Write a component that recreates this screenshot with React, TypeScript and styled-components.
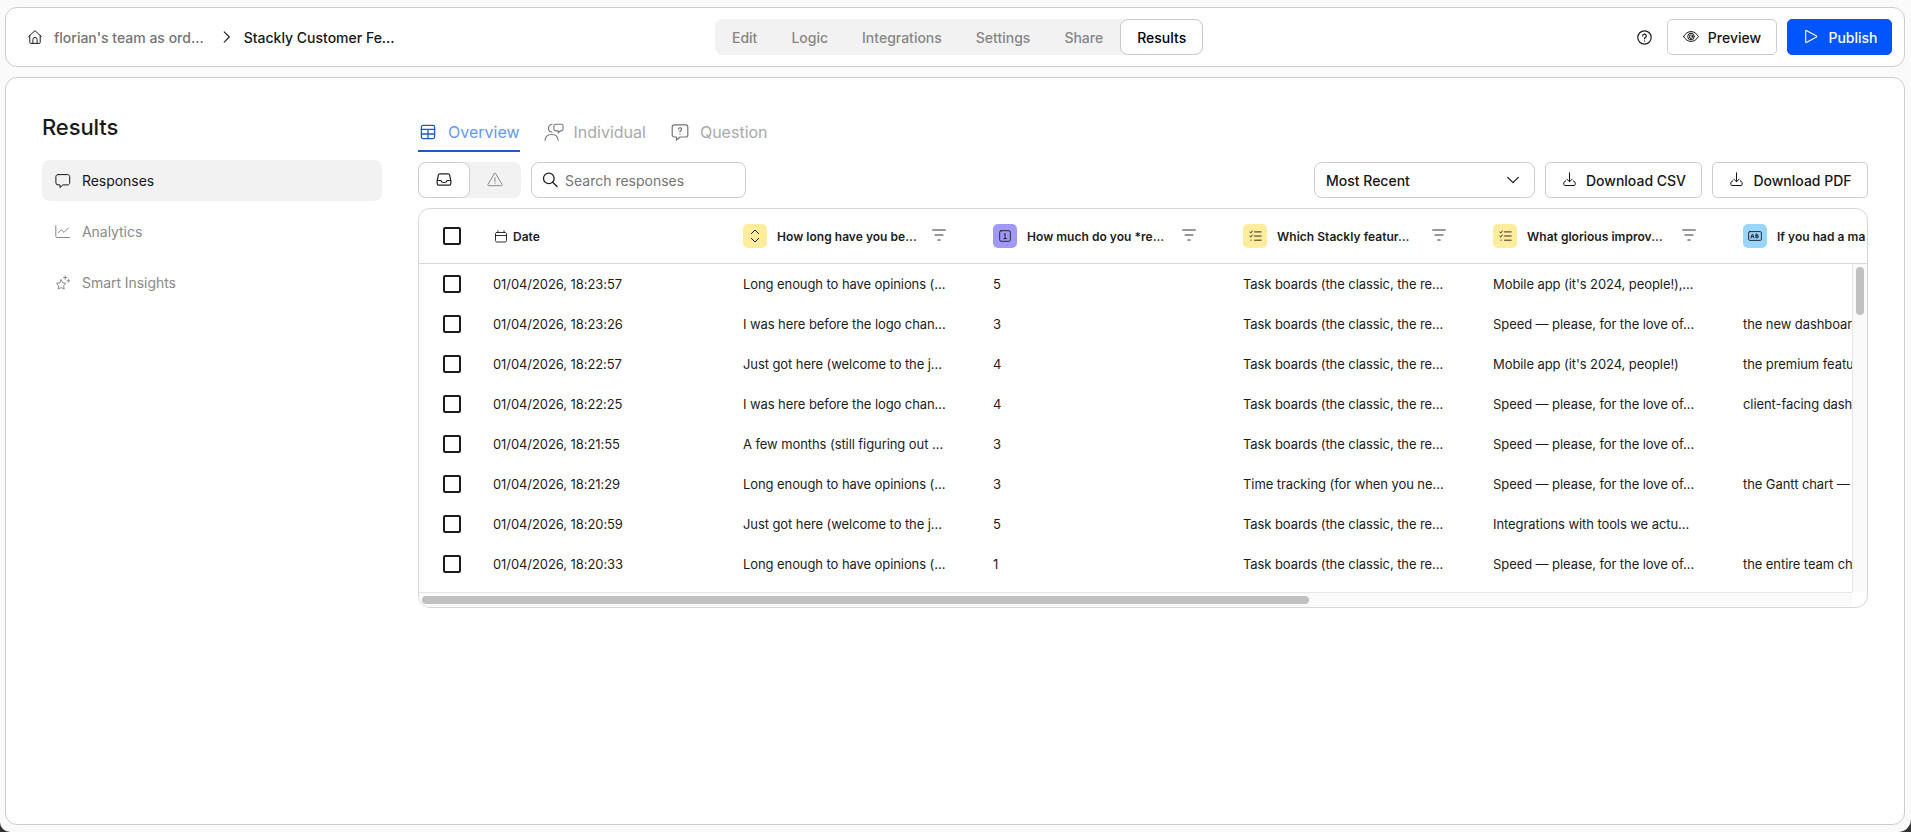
import React from 'react';
import styled, { createGlobalStyle } from 'styled-components';

const GlobalStyle = createGlobalStyle`
  * { box-sizing: border-box; }
  body { margin: 0; background: #333; overflow: hidden; }
  button { font: inherit; color: inherit; cursor: pointer; }
`;

const Page = styled.div`
  display: flex;
  flex-direction: column;
  gap: 10px;
  height: 100vh;
  padding: 7px 6px 7px 5px;
  background: #fafafa;
  border-radius: 0 0 13px 10px;
  font-family: Inter, 'Liberation Sans', sans-serif;
  font-size: 14px;
  line-height: 20px;
  color: #1c1c1c;
  white-space: nowrap;
`;

const Card = styled.div`
  background: #fff;
  border: 1px solid #cdcdcd;
  border-radius: 12px;
`;

const TopBar = styled(Card).attrs({ as: 'header' })`
  display: flex;
  align-items: center;
  flex: 0 0 60px;
  padding: 0 12px 0 22px;
`;

const Breadcrumbs = styled.nav`
  display: flex;
  align-items: center;
  flex: 0 0 687px;
  font-weight: 500;
`;

const Crumb = styled.span<{ $current?: boolean }>`
  padding-top: 2px;
  margin-left: ${(p) => (p.$current ? 13 : 12)}px;
  color: ${(p) => (p.$current ? '#161616' : '#747474')};
`;

const CrumbArrow = styled.span`
  display: flex;
  margin-left: 19px;
`;

const StepTabs = styled.nav`
  display: flex;
  background: #f2f2f2;
  border-radius: 8px;
`;

const StepTab = styled.a<{ $active?: boolean }>`
  height: 36px;
  padding: 8px 16px 6px;
  border: 1px solid ${(p) => (p.$active ? '#c9c9c9' : 'transparent')};
  border-radius: 8px;
  background: ${(p) => (p.$active ? '#fff' : 'transparent')};
  color: ${(p) => (p.$active ? '#000' : '#868686')};
  font-weight: 500;
`;

const BarActions = styled.div`
  display: flex;
  align-items: center;
  gap: 10px;
  margin-left: auto;
`;

const HelpButton = styled.button`
  display: flex;
  padding: 0;
  margin-right: 5px;
  border: 0;
  background: none;
`;

const Button = styled.button<{ $width: number; $primary?: boolean }>`
  display: flex;
  align-items: center;
  justify-content: center;
  gap: 9px;
  width: ${(p) => p.$width}px;
  height: 36px;
  padding: ${(p) => (p.$primary ? '0 0 0 2px' : '0')};
  border: 1px solid ${(p) => (p.$primary ? '#0055ff' : '#cdcdcd')};
  border-radius: 5px;
  background: ${(p) => (p.$primary ? '#0055ff' : '#fff')};
  color: ${(p) => (p.$primary ? '#fff' : '#161616')};
  font-weight: 500;
`;

const ButtonLabel = styled.span`
  padding-top: 2px;
`;

const Panel = styled(Card).attrs({ as: 'main' })`
  display: flex;
  flex: 1;
  gap: 36px;
  min-height: 0;
  padding: 34px 36px 0 36px;
`;

const Sidebar = styled.aside`
  display: flex;
  flex-direction: column;
  gap: 10px;
  flex: 0 0 340px;
`;

const Title = styled.h1`
  margin: 0 0 9px;
  padding-top: 1px;
  font-size: 22px;
  line-height: 28px;
  font-weight: 500;
  letter-spacing: -0.1px;
  color: #1a1a1a;
`;

const SideItem = styled.a<{ $active?: boolean }>`
  display: flex;
  align-items: center;
  gap: 11px;
  height: 41px;
  padding: 0 12px 0 13px;
  border-radius: 8px;
  background: ${(p) => (p.$active ? '#f2f2f2' : 'transparent')};
  color: ${(p) => (p.$active ? '#161616' : '#8a8a8a')};
`;

const SideLabel = styled.span`
  padding-top: 1px;
  letter-spacing: -0.05px;
`;

const Content = styled.section`
  display: flex;
  flex-direction: column;
  gap: 10px;
  flex: 1;
  min-width: 0;
`;

const ViewTabs = styled.div`
  display: flex;
  gap: 24px;
  height: 40px;
`;

const ViewTab = styled.a<{ $active?: boolean }>`
  display: flex;
  align-items: center;
  gap: 10px;
  padding-top: 2px;
  font-size: 16px;
  color: ${(p) => (p.$active ? '#6698f0' : '#a9a9a9')};
  border-bottom: 2px solid ${(p) => (p.$active ? '#1b5cc4' : 'transparent')};
`;

const ViewIcon = styled.span<{ $active?: boolean }>`
  display: flex;
  justify-content: center;
  width: 20px;
  color: ${(p) => (p.$active ? '#1b5cc4' : '#747474')};
`;

const Toolbar = styled.div`
  display: flex;
  align-items: center;
  gap: 10px;
`;

const InboxToggle = styled.div`
  display: flex;
  background: #f2f2f2;
  border-radius: 8px;
`;

const InboxOption = styled.button<{ $active?: boolean }>`
  display: flex;
  align-items: center;
  justify-content: center;
  width: ${(p) => (p.$active ? 52 : 51)}px;
  height: 36px;
  padding: 0 1px 0 0;
  border: 1px solid ${(p) => (p.$active ? '#cdcdcd' : 'transparent')};
  border-radius: 8px;
  background: ${(p) => (p.$active ? '#fff' : 'transparent')};
  color: ${(p) => (p.$active ? '#222' : '#8c8c8c')};
`;

const SearchBox = styled.label`
  display: flex;
  align-items: center;
  gap: 7px;
  width: 215px;
  height: 36px;
  padding: 0 10px;
  border: 1px solid #cdcdcd;
  border-radius: 8px;
`;

const SearchInput = styled.input`
  flex: 1;
  min-width: 0;
  padding: 2px 0 0;
  border: 0;
  outline: 0;
  font: inherit;
  &::placeholder { color: #757575; opacity: 1; }
`;

const ToolbarEnd = styled.div`
  display: flex;
  gap: 10px;
  margin-left: auto;
`;

const SortSelect = styled.button`
  display: flex;
  align-items: center;
  justify-content: space-between;
  width: 221px;
  height: 36px;
  padding: 0 14px 0 11px;
  border: 1px solid #cdcdcd;
  border-radius: 8px;
  background: #fff;
  font-weight: 500;
  color: #161616;
`;

const TableCard = styled.div`
  display: flex;
  flex-direction: column;
  height: 400px;
  border: 1px solid #d6d6d6;
  border-radius: 12px;
  overflow: hidden;
`;

const HeaderRow = styled.div`
  display: flex;
  align-items: center;
  flex: 0 0 55px;
  border-bottom: 1px solid #d9d9d9;
  font-size: 12px;
  font-weight: 600;
  letter-spacing: 0.03px;
`;

const CheckCell = styled.div`
  flex: 0 0 74px;
  padding-left: 24px;
`;

const Checkbox = styled.div`
  width: 18px;
  height: 18px;
  border: 2px solid #1c1c1c;
  border-radius: 2px;
`;

const HeaderCell = styled.div`
  display: flex;
  align-items: center;
  flex: 0 0 250px;
  padding-right: 47px;
`;

const DateHeader = styled(HeaderCell)`
  gap: 6px;
  padding-left: 2px;
`;

const HeaderLabel = styled.span`
  padding-top: 1px;
`;

const TypeBadge = styled.span<{ $color: string }>`
  display: flex;
  align-items: center;
  justify-content: center;
  width: 24px;
  height: 24px;
  margin-right: 10px;
  border-radius: 5px;
  background: ${(p) => p.$color};
`;

const FilterSlot = styled.span`
  display: flex;
  margin: -2px 0 0 auto;
  color: #333;
`;

const TableBody = styled.div`
  display: flex;
  height: 328px;
`;

const Rows = styled.div`
  flex: 1;
  min-width: 0;
  overflow: hidden;
  font-size: 13px;
  letter-spacing: -0.08px;
`;

const Row = styled.div`
  display: flex;
  align-items: center;
  height: 40px;
`;

const Cell = styled.div`
  flex: 0 0 250px;
  padding-right: 40px;
`;

const VTrack = styled.div`
  flex: 0 0 15px;
  padding: 3px;
  border-left: 1px solid #e6e6e6;
  background: #fafafa;
`;

const VThumb = styled.div`
  width: 8px;
  height: 48px;
  border-radius: 4px;
  background: #c1c1c1;
`;

const HTrack = styled.div`
  height: 15px;
  margin-right: 15px;
  padding: 3px;
  border-top: 1px solid #e6e6e6;
  background: #fafafa;
`;

const HThumb = styled.div`
  width: 887px;
  height: 8px;
  border-radius: 4px;
  background: #c1c1c1;
`;

type IconProps = { w?: number; h?: number; sw?: number; children: React.ReactNode };
const Icon = ({ w = 16, h = 16, sw = 1, children }: IconProps) => (
  <svg width={w} height={h} viewBox={`0 0 ${w} ${h}`} fill="none" stroke="currentColor" strokeWidth={sw} strokeLinecap="round" strokeLinejoin="round">
    {children}
  </svg>
);

const HomeIcon = () => (
  <Icon w={14} h={14}>
    <path d="M.6 6.6 7 .7l6.4 5.9M1.8 5.6v6.8c0 .6.4 1 1 1h8.4c.6 0 1-.4 1-1V5.6M4.9 13.4V9.5a2.1 2.1 0 0 1 4.2 0v3.9" />
  </Icon>
);
const HelpIcon = () => (
  <Icon w={15} h={15} sw={1.2}>
    <circle cx="7.5" cy="7.5" r="6.7" />
    <path d="M5.7 5.9a1.8 1.8 0 1 1 2.5 1.7c-.5.2-.7.5-.7 1v.2M7.5 10.8v.1" />
  </Icon>
);
const EyeIcon = () => (
  <Icon>
    <path d="M.6 7.5C2.3 4.500 5 2.600 8 2.600S13.700 4.500 15.400 7.500C13.700 10.500 11 12.400 8 12.400S2.300 10.500 .6 7.500Z" />
    <circle cx="8" cy="7.500" r="3.300" />
    <path d="M9.600 6.600A1.800 1.800 0 1 1 8 5.700M8 7.500l1.300-1.100" />
  </Icon>
);
const PlayIcon = () => (
  <Icon sw={1.1}>
    <path d="M2.700 1.700v11.600c0 .3.3.4.600.3l10.200-5.700c.3-.2.3-.6 0-.8L3.300 1.400c-.3-.1-.6 0-.6.3Z" />
  </Icon>
);
const DownloadIcon = () => (
  <Icon>
    <path d="M8.500 .8v8.900M5.800 7.100 8.500 9.800l2.700-2.700M4.700 9H4.100L2.800 10.800v1.700c0 .6.400 1 1 1h9.400c.6 0 1-.4 1-1v-1.700L12.900 9h-.6" />
  </Icon>
);
const ChatIcon = () => (
  <Icon>
    <path d="M3 1.600h9.600c1.200 0 2.100.9 2.100 2.100v6.100c0 1.200-.9 2.100-2.100 2.100H7.900L5 14.600v-2.700H3A2.100 2.100 0 0 1 .9 9.800V3.700c0-1.200.9-2.100 2.100-2.100Z" />
  </Icon>
);
const ChartIcon = () => (
  <Icon>
    <path d="M.8 1.800v10.700c0 .6.4 1 1 1h12.900M3.400 8.800l2.700-3 2.900 2.600 4.500-4.600" />
  </Icon>
);
const SparkIcon = () => (
  <Icon>
    <path d="m6.200 4.700 1.500 3.100 3.300.5-2.400 2.400.6 3.400-3-1.600-3 1.600.6-3.400L1.400 8.300l3.300-.5ZM10.200.9v3.400M8.500 2.600h3.400M13.400 4.400v2.800M12 5.800h2.800" />
  </Icon>
);
const TableIcon = () => (
  <Icon sw={1.3}>
    <rect x="1.400" y="1.400" width="13.200" height="13.200" rx="1.500" />
    <path d="M1.400 5.400h13.200M1.400 10h13.200M8 5.400v9.200" />
  </Icon>
);
const PeopleIcon = () => (
  <Icon w={20} h={18} sw={1.1}>
    <path d="M1 17.200c.4-3.400 3-5.700 6.600-5.700s6.200 2.300 6.600 5.700M8 9.300A4.100 4.100 0 0 1 8 1.200M11.700 1.300h5.500c1 0 1.800.8 1.800 1.800v3c0 1-.8 1.800-1.800 1.800h-.9l-2 1.900V7.900h-2.600c-1 0-1.800-.8-1.800-1.800v-3c0-1 .8-1.800 1.800-1.800Z" />
  </Icon>
);
const QuestionIcon = () => (
  <Icon w={18} h={18} sw={1.2}>
    <path d="M3.300 1.800h11.400c1.200 0 2.100.9 2.100 2.100v8c0 1.200-.9 2.100-2.100 2.100H9l-3.500 3v-3H3.300a2.100 2.100 0 0 1-2.100-2.100v-8c0-1.200.9-2.100 2.100-2.100Z" />
    <path d="M7.500 6.100a1.500 1.500 0 1 1 2.100 1.500c-.4.200-.6.500-.6.900v.3M9 11v.1" />
  </Icon>
);
const InboxIcon = () => (
  <Icon sw={1.2}>
    <path d="M3.900 1.800h8.200c.8 0 1.300.4 1.500 1.100L14.800 8.500v3.200c0 .8-.6 1.400-1.400 1.400H2.600c-.8 0-1.400-.6-1.400-1.400V8.500l1.200-5.600c.2-.7.700-1.100 1.500-1.100ZM1.200 8.500H5c.2 1.200 1.300 2 3 2s2.800-.8 3-2h3.800" />
  </Icon>
);
const WarningIcon = () => (
  <Icon>
    <path d="M7.400 1.400.9 12.600c-.3.500 0 1.100.6 1.100h13c.6 0 .9-.6.6-1.100L8.600 1.400a.7.7 0 0 0-1.200 0ZM8 5.800v3.900M8 11.500v.1" />
  </Icon>
);
const SearchIcon = () => (
  <Icon sw={1.3}>
    <circle cx="6.800" cy="6.400" r="5.300" />
    <path d="m10.700 10.300 4.300 4.200" />
  </Icon>
);
const ChevronRight = () => (
  <Icon w={8} h={12} sw={1.1}>
    <path d="M1.200.900 6.300 6l-5.100 5.100" />
  </Icon>
);
const ChevronDown = () => (
  <Icon w={14} h={8} sw={1.2}>
    <path d="M1.700 1.400 7 6.700l5.300-5.300" />
  </Icon>
);
const CalendarIcon = () => (
  <Icon w={12} h={13} sw={0.9}>
    <path d="M2 2.500h8c.9 0 1.500.6 1.500 1.500v6.500c0 .9-.6 1.500-1.500 1.500H2c-.9 0-1.500-.6-1.500-1.500V4c0-.9.6-1.500 1.500-1.500ZM.5 5.500h11M3 .8v1.700M9 .8v1.700" />
  </Icon>
);
const FilterIcon = () => (
  <Icon w={14} h={12} sw={1.1}>
    <path d="M.7 1h12.600M3 6h8M5.800 11h2.400" />
  </Icon>
);
const SortIcon = () => (
  <Icon w={12} h={14}>
    <path d="M2.300 4.700 6 1l3.700 3.700M2.300 9.300 6 13l3.700-3.700" />
  </Icon>
);
const NumberIcon = () => (
  <Icon w={12} h={12} sw={0.9}>
    <rect x=".7" y=".7" width="10.600" height="10.600" rx="1.500" />
    <path d="M5 4.300 6.100 3.600v4.900M4.800 8.600h2.600" />
  </Icon>
);
const ListIcon = () => (
  <Icon w={13} h={12} sw={0.9}>
    <path d="M5.500 1.900h6.700M5.500 6h6.700M5.500 10.200h6.700M.8 2.100l1 .9L3.400.9M.8 6.200l1 .9L3.400 5M1.900 10.200h.3" />
  </Icon>
);
const TextIcon = () => (
  <Icon w={14} h={10} sw={0.9}>
    <rect x=".6" y=".6" width="12.800" height="8.800" rx="1.200" />
    <path d="M2.900 7 4.200 3.200h.5L6 7M3.300 5.700h2.200M7.900 3.200v3.700h1.500c1.500 0 1.500-1.900 0-1.900H7.900h1.300c1.300 0 1.300-1.800 0-1.800Z" />
  </Icon>
);

const steps = ['Edit', 'Logic', 'Integrations', 'Settings', 'Share', 'Results'];

const sideItems = [
  { label: 'Responses', icon: <ChatIcon /> },
  { label: 'Analytics', icon: <ChartIcon /> },
  { label: 'Smart Insights', icon: <SparkIcon /> },
];

const views = [
  { label: 'Overview', icon: <TableIcon /> },
  { label: 'Individual', icon: <PeopleIcon /> },
  { label: 'Question', icon: <QuestionIcon /> },
];

const columns = [
  { label: 'How long have you be...', color: '#ffec9c', icon: <SortIcon /> },
  { label: 'How much do you *re...', color: '#a199f8', icon: <NumberIcon /> },
  { label: 'Which Stackly featur...', color: '#ffec9c', icon: <ListIcon /> },
  { label: 'What glorious improv...', color: '#ffec9c', icon: <ListIcon /> },
  { label: 'If you had a ma', color: '#99d6ff', icon: <TextIcon /> },
];

const LONG = 'Long enough to have opinions (…';
const LOGO = 'I was here before the logo chan…';
const JUST = 'Just got here (welcome to the j…';
const BOARDS = 'Task boards (the classic, the re…';
const SPEED = 'Speed — please, for the love of…';

const rows = [
  ['01/04/2026, 18:23:57', LONG, '5', BOARDS, "Mobile app (it's 2024, people!),…", ''],
  ['01/04/2026, 18:23:26', LOGO, '3', BOARDS, SPEED, 'the new dashboar'],
  ['01/04/2026, 18:22:57', JUST, '4', BOARDS, "Mobile app (it's 2024, people!)", 'the premium featu'],
  ['01/04/2026, 18:22:25', LOGO, '4', BOARDS, SPEED, 'client-facing dash'],
  ['01/04/2026, 18:21:55', 'A few months (still figuring out …', '3', BOARDS, SPEED, ''],
  ['01/04/2026, 18:21:29', LONG, '3', 'Time tracking (for when you ne…', SPEED, 'the Gantt chart —'],
  ['01/04/2026, 18:20:59', JUST, '5', BOARDS, 'Integrations with tools we actu…', ''],
  ['01/04/2026, 18:20:33', LONG, '1', BOARDS, SPEED, 'the entire team ch'],
];

export default function App() {
  return (
    <>
      <GlobalStyle />
      <Page>
        <TopBar>
          <Breadcrumbs>
            <HomeIcon />
            <Crumb>florian's team as ord...</Crumb>
            <CrumbArrow><ChevronRight /></CrumbArrow>
            <Crumb $current>Stackly Customer Fe...</Crumb>
          </Breadcrumbs>
          <StepTabs>
            {steps.map((s) => <StepTab key={s} $active={s === 'Results'}>{s}</StepTab>)}
          </StepTabs>
          <BarActions>
            <HelpButton aria-label="Help"><HelpIcon /></HelpButton>
            <Button $width={110}><EyeIcon /><ButtonLabel>Preview</ButtonLabel></Button>
            <Button $width={105} $primary><PlayIcon /><ButtonLabel>Publish</ButtonLabel></Button>
          </BarActions>
        </TopBar>
        <Panel>
          <Sidebar>
            <Title>Results</Title>
            {sideItems.map((item, i) => (
              <SideItem key={item.label} $active={i === 0}>
                {item.icon}
                <SideLabel>{item.label}</SideLabel>
              </SideItem>
            ))}
          </Sidebar>
          <Content>
            <ViewTabs>
              {views.map((v, i) => (
                <ViewTab key={v.label} $active={i === 0}>
                  <ViewIcon $active={i === 0}>{v.icon}</ViewIcon>
                  <span>{v.label}</span>
                </ViewTab>
              ))}
            </ViewTabs>
            <Toolbar>
              <InboxToggle>
                <InboxOption $active aria-label="Inbox"><InboxIcon /></InboxOption>
                <InboxOption aria-label="Spam"><WarningIcon /></InboxOption>
              </InboxToggle>
              <SearchBox>
                <SearchIcon />
                <SearchInput placeholder="Search responses" />
              </SearchBox>
              <ToolbarEnd>
                <SortSelect><ButtonLabel>Most Recent</ButtonLabel><ChevronDown /></SortSelect>
                <Button $width={157}><DownloadIcon /><ButtonLabel>Download CSV</ButtonLabel></Button>
                <Button $width={156}><DownloadIcon /><ButtonLabel>Download PDF</ButtonLabel></Button>
              </ToolbarEnd>
            </Toolbar>
            <TableCard>
              <HeaderRow>
                <CheckCell><Checkbox /></CheckCell>
                <DateHeader><CalendarIcon /><HeaderLabel>Date</HeaderLabel></DateHeader>
                {columns.map((c, i) => (
                  <HeaderCell key={c.label}>
                    <TypeBadge $color={c.color}>{c.icon}</TypeBadge>
                    <HeaderLabel>{c.label}</HeaderLabel>
                    {i < 4 && <FilterSlot><FilterIcon /></FilterSlot>}
                  </HeaderCell>
                ))}
              </HeaderRow>
              <TableBody>
                <Rows>
                  {rows.map((r) => (
                    <Row key={r[0]}>
                      <CheckCell><Checkbox /></CheckCell>
                      {r.map((text, i) => <Cell key={i}>{text}</Cell>)}
                    </Row>
                  ))}
                </Rows>
                <VTrack><VThumb /></VTrack>
              </TableBody>
              <HTrack><HThumb /></HTrack>
            </TableCard>
          </Content>
        </Panel>
      </Page>
    </>
  );
}
